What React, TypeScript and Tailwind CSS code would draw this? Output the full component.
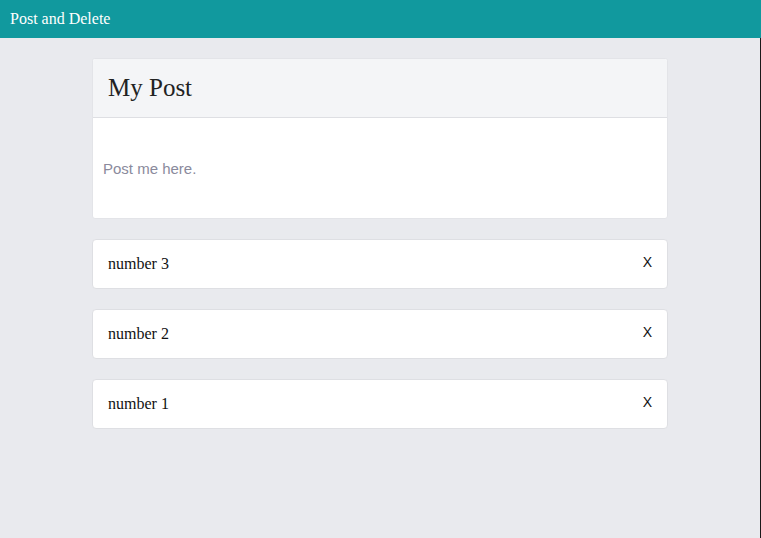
import { useState } from 'react';

export default function App() {
  const [posts, setPosts] = useState(['number 3', 'number 2', 'number 1']);
  const [text, setText] = useState('');

  return (
    <div className="min-h-screen bg-[#e9eaee] font-['Liberation_Serif',serif] border-r border-[#1a1a1a]">
      {/* Header */}
      <header className="h-[38px] bg-[#11999e] flex items-center px-[10px] -mr-px">
        <h1 className="text-[16px] text-white">Post and Delete</h1>
      </header>

      <main className="w-[576px] mx-auto pt-[20px] pb-10">
        {/* Post form */}
        <div className="bg-white border border-[#e3e4e8] rounded-[3px] overflow-hidden">
          <div className="h-[59px] bg-[#f4f5f7] border-b border-[#dedfe3] flex items-center px-[15px]">
            <h2 className="text-[25px] text-[#222]">My Post</h2>
          </div>
          <textarea
            value={text}
            onChange={(e) => setText(e.target.value)}
            onKeyDown={(e) => {
              if (e.key === 'Enter' && text.trim()) {
                e.preventDefault();
                setPosts([text.trim(), ...posts]);
                setText('');
              }
            }}
            placeholder="Post me here."
            className="block w-full h-[100px] resize-none px-[10px] pt-[40px] text-[15px] font-['Liberation_Sans',sans-serif] text-[#333] placeholder:text-[#8a8a9c] outline-none"
          />
        </div>

        {/* Post list */}
        <div className="mt-[20px] flex flex-col gap-[20px]">
          {posts.map((post, i) => (
            <div
              key={post + i}
              className="h-[50px] bg-white border border-[#dedfe3] rounded-[4px] flex items-center justify-between pl-[15px] pr-[15px]"
            >
              <span className="text-[16px] text-[#111]">{post}</span>
              <button
                onClick={() => setPosts(posts.filter((_, j) => j !== i))}
                className="text-[14px] font-['Liberation_Sans',sans-serif] text-[#111] -mt-[4px]"
              >
                X
              </button>
            </div>
          ))}
        </div>
      </main>
    </div>
  );
}
